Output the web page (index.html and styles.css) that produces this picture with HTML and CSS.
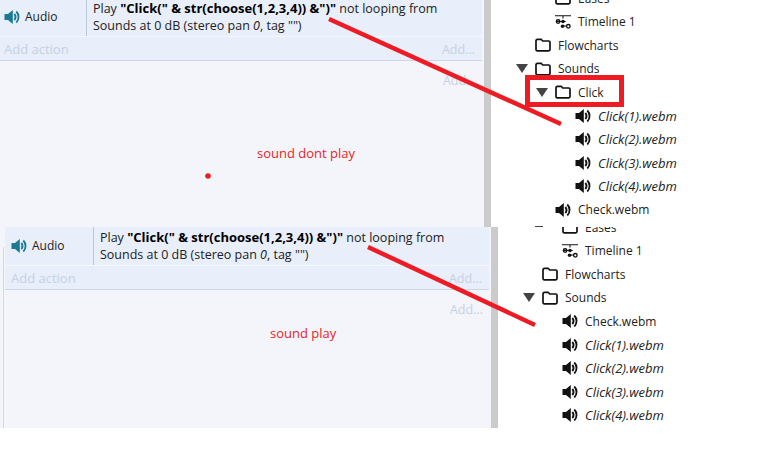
FILE: index.html
```html
<!DOCTYPE html>
<html lang="en">
<head>
    <meta charset="UTF-8">
    <title>Sound dont play</title>
    <link rel="stylesheet" href="styles.css">
</head>
<body>
    <svg class="defs" width="0" height="0">
        <symbol id="i-speaker" viewBox="0 0 16 16">
            <path d="M0.500 5h3.500L8.800 1v14L4 11H0.500z"/>
            <path d="M10.300 5c1.600 1.600 1.600 4.400 0 6" fill="none" stroke="currentColor" stroke-width="2"/>
            <path d="M12.300 2.500c3 2.900 3 8.100 0 11" fill="none" stroke="currentColor" stroke-width="1.800"/>
        </symbol>
        <symbol id="i-folder" viewBox="0 0 16 14">
            <path d="M1 3c0-1 .5-1.700 1.500-1.700h3.700L7.700 3h6c.9 0 1.300.5 1.300 1.300v7.200c0 .8-.5 1.300-1.300 1.300H2.300C1.500 12.800 1 12.300 1 11.500z" fill="none" stroke="currentColor" stroke-width="1.700"/>
        </symbol>
        <symbol id="i-timeline" viewBox="0 0 18 16">
            <path d="M0 1h18M9 1v3" fill="none" stroke="currentColor" stroke-width="1.200"/>
            <path d="M2 7.500h10M7 12.500h6" fill="none" stroke="currentColor" stroke-width="1.200"/>
            <circle cx="3.500" cy="7.500" r="2" fill="none" stroke="currentColor" stroke-width="1.500"/>
            <circle cx="9" cy="7.500" r="2"/>
            <circle cx="8.500" cy="12.800" r="2"/>
            <circle cx="15" cy="12.800" r="2" fill="none" stroke="currentColor" stroke-width="1.500"/>
        </symbol>
    </svg>

    <section class="shot shot-top">
        <div class="panel">
            <div class="action-row">
                <div class="action-kind"><svg class="ico-audio"><use href="#i-speaker"/></svg>Audio</div>
                <div class="action-text">Play <b>"Click(" &amp; str(choose(1,2,3,4)) &amp;")"</b> not looping from<br>Sounds at 0 dB (stereo pan <i>0</i>, tag "")</div>
            </div>
            <div class="add-row"><span class="add-action">Add action</span><span>Add...</span></div>
            <div class="add-more">Add...</div>
        </div>
        <div class="scrollbar"></div>
        <ul class="tree">
            <li class="lv1"><span class="arrow"></span><svg class="ico"><use href="#i-folder"/></svg>Eases</li>
            <li class="lv1"><span class="arrow"></span><svg class="ico"><use href="#i-timeline"/></svg>Timeline 1</li>
            <li class="lv0"><span class="arrow"></span><svg class="ico"><use href="#i-folder"/></svg>Flowcharts</li>
            <li class="lv0"><span class="arrow open"></span><svg class="ico"><use href="#i-folder"/></svg>Sounds</li>
            <li class="lv1"><span class="arrow open"></span><svg class="ico"><use href="#i-folder"/></svg>Click</li>
            <li class="lv2"><span class="arrow"></span><svg class="ico"><use href="#i-speaker"/></svg><i>Click(1).webm</i></li>
            <li class="lv2"><span class="arrow"></span><svg class="ico"><use href="#i-speaker"/></svg><i>Click(2).webm</i></li>
            <li class="lv2"><span class="arrow"></span><svg class="ico"><use href="#i-speaker"/></svg><i>Click(3).webm</i></li>
            <li class="lv2"><span class="arrow"></span><svg class="ico"><use href="#i-speaker"/></svg><i>Click(4).webm</i></li>
            <li class="lv1"><span class="arrow"></span><svg class="ico"><use href="#i-speaker"/></svg>Check.webm</li>
        </ul>
    </section>

    <section class="shot shot-bottom">
        <div class="panel">
            <div class="action-row">
                <div class="action-kind"><svg class="ico-audio"><use href="#i-speaker"/></svg>Audio</div>
                <div class="action-text">Play <b>"Click(" &amp; str(choose(1,2,3,4)) &amp;")"</b> not looping from<br>Sounds at 0 dB (stereo pan <i>0</i>, tag "")</div>
            </div>
            <div class="add-row"><span class="add-action">Add action</span><span>Add...</span></div>
            <div class="add-more">Add...</div>
        </div>
        <div class="scrollbar"></div>
        <ul class="tree">
            <li class="lv1"><span class="arrow"></span><svg class="ico"><use href="#i-folder"/></svg>Eases</li>
            <li class="lv1"><span class="arrow"></span><svg class="ico"><use href="#i-timeline"/></svg>Timeline 1</li>
            <li class="lv0"><span class="arrow"></span><svg class="ico"><use href="#i-folder"/></svg>Flowcharts</li>
            <li class="lv0"><span class="arrow open"></span><svg class="ico"><use href="#i-folder"/></svg>Sounds</li>
            <li class="lv1"><span class="arrow"></span><svg class="ico"><use href="#i-speaker"/></svg>Check.webm</li>
            <li class="lv1"><span class="arrow"></span><svg class="ico"><use href="#i-speaker"/></svg><i>Click(1).webm</i></li>
            <li class="lv1"><span class="arrow"></span><svg class="ico"><use href="#i-speaker"/></svg><i>Click(2).webm</i></li>
            <li class="lv1"><span class="arrow"></span><svg class="ico"><use href="#i-speaker"/></svg><i>Click(3).webm</i></li>
            <li class="lv1"><span class="arrow"></span><svg class="ico"><use href="#i-speaker"/></svg><i>Click(4).webm</i></li>
        </ul>
    </section>

    <!-- anotacoes em cima dos prints -->
    <svg class="marks" width="760" height="472">
        <path d="M329 19L561 124M368 247L535 325" stroke="#ed1c24" stroke-width="4.500" fill="none"/>
        <rect x="527.500" y="77.500" width="94" height="27" stroke="#ed1c24" stroke-width="5" fill="none"/>
        <circle cx="208" cy="176" r="2.800" fill="#ed1c24"/>
        <rect x="535" y="226" width="8" height="1" fill="#444"/>
    </svg>
    <span class="note note-1">sound dont play</span>
    <span class="note note-2">sound play</span>
</body>
</html>
```

FILE: styles.css
```css
* {
    box-sizing: border-box;
}

body {
    margin: 0;
    background-color: #fff;
    color: #222;
    font-family: "Open Sans", "Noto Sans", sans-serif;
    font-size: 12px;
    position: relative;
    height: 472px;
    overflow: hidden;
}

.defs {
    display: block;
    height: 0;
}

.shot {
    display: flex;
    overflow: hidden;
    background-color: #f3f5fb;
}

.shot-top {
    height: 227px;
}

.shot-top .panel {
    margin: -2px 0 0 -2px;
}

.shot-bottom {
    height: 201px;
    padding-left: 5px;
    /* borda fina do painel, comeca abaixo da linha */
    background: linear-gradient(#d9d9d9, #d9d9d9) 3px 20px / 1px 100% no-repeat, #f3f5fb;
}

.panel {
    width: 486px;
    flex: none;
    position: relative;
}

.action-row {
    display: flex;
    width: 484px;
    height: 39px;
    background-color: #e8eefa;
    border-bottom: 1px solid #f6f8fd;
}

.action-kind {
    display: flex;
    align-items: center;
    gap: 5px;
    width: 89px;
    padding-left: 6px;
    padding-bottom: 1px;
    border-right: 1px solid #bcc8dc;
}

.ico-audio {
    width: 16px;
    height: 16px;
    color: #1a7a92;
    fill: #1a7a92;
}

.action-text {
    padding: 1.500px 0 0 6px;
    font-size: 12.500px;
    line-height: 17.500px;
    white-space: nowrap;
}

.action-text b {
    color: #000;
    font-size: 13px;
}

.add-row {
    display: flex;
    justify-content: space-between;
    align-items: center;
    width: 484px;
    height: 24px;
    padding: 1px 7px 0 6px;
    background-color: #e8eefa;
    border-bottom: 1px solid #ccd6e8;
    color: #c6d1e5;
    font-size: 12.500px;
}

.add-action {
    font-size: 13px;
}

.add-more {
    text-align: right;
    padding: 11px 8px 0 0;
    color: #c6d1e5;
    font-size: 12.500px;
}

.scrollbar {
    width: 7px;
    flex: none;
    background-color: #cbcbcb;
}

.tree {
    flex: 1;
    list-style: none;
    margin: -13.500px 0 0;
    padding: 0;
    background-color: #fff;
    white-space: nowrap;
}

.shot-bottom .tree {
    margin-top: -11.500px;
}

.tree li {
    display: flex;
    align-items: center;
    height: 23.500px;
    color: #222;
}

.tree i {
    font-size: 13px;
}

.lv0 {
    padding-left: 25px;
}

.lv1 {
    padding-left: 45px;
}

.lv2 {
    padding-left: 65px;
}

.arrow {
    width: 19px;
    flex: none;
}

.arrow.open::before {
    content: "";
    display: block;
    width: 0;
    height: 0;
    border-left: 6px solid transparent;
    border-right: 6px solid transparent;
    border-top: 9px solid #444;
}

.ico {
    width: 16px;
    height: 16px;
    margin-right: 7px;
    flex: none;
    color: #111;
    fill: #111;
}

.marks {
    position: absolute;
    left: 0;
    top: 0;
    pointer-events: none;
}

.note {
    position: absolute;
    color: #ed1c24;
    font-size: 13px;
    line-height: 16px;
}

.note-1 {
    left: 257px;
    top: 145px;
}

.note-2 {
    left: 270px;
    top: 325px;
}
```
